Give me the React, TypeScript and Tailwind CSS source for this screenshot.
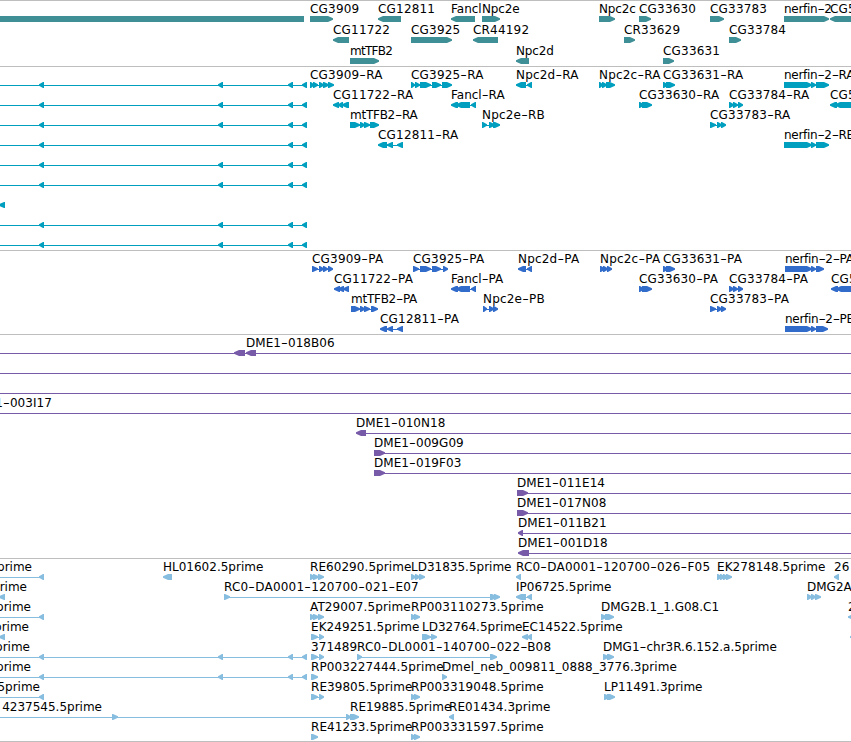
import clsx from 'clsx';

type Strand = '+' | '-';
type Block = [start: number, end: number];

type Feature = {
  row: number;
  strand: Strand;
  blocks: Block[];
  label?: string;
  labelX?: number;
  // right edge of a label whose start is scrolled out of view
  labelEnd?: number;
  line?: Block;
};

type TrackData = {
  name: string;
  height: number;
  pitch: number;
  color: string;
  features: Feature[];
};

const VIEW_WIDTH = 851;
const RIGHT = 860;

const f = (
  row: number,
  label: string,
  strand: Strand,
  blocks: Block[],
  extra: Partial<Feature> = {},
): Feature => ({row, label, strand, blocks, ...extra});

const genes: Feature[] = [
  f(0, '', '-', [[-20, 304]]),
  f(0, 'CG3909', '+', [[310, 333]]),
  f(0, 'CG12811', '-', [[378, 401]]),
  f(0, 'Fancl', '-', [[451, 475]]),
  f(0, 'Npc2e', '+', [[482, 500]]),
  f(0, 'Npc2c', '+', [[599, 615]]),
  f(0, 'CG33630', '+', [[639, 651]]),
  f(0, 'CG33783', '+', [[710, 724]]),
  f(0, 'nerfin-2', '+', [[784, 829]]),
  f(0, 'CG5', '-', [[830, 870]]),
  f(1, 'CG11722', '-', [[333, 349]]),
  f(1, 'CG3925', '+', [[411, 452]]),
  f(1, 'CR44192', '-', [[473, 498]]),
  f(1, 'CR33629', '+', [[624, 635]]),
  f(1, 'CG33784', '+', [[729, 741]]),
  f(2, 'mtTFB2', '+', [[350, 379]]),
  f(2, 'Npc2d', '-', [[516, 529]]),
  f(2, 'CG33631', '+', [[663, 674]]),
];

const longIntrons: Block[] = [[39, 44], [218, 223], [288, 293], [302, 307]];

const transcripts: Feature[] = [
  ...[0, 1, 2, 4, 5, 7, 8].map((row) => f(row, '', '-', longIntrons, {line: [-5, 304]})),
  f(3, '', '-', [[39, 44], [288, 293], [302, 307]], {line: [-5, 304]}),
  f(6, '', '-', [[-1, 5]]),
  f(0, 'CG3909-RA', '+', [[310, 314], [313, 318], [319, 324], [323, 329], [328, 334]]),
  f(0, 'CG3925-RA', '+', [[411, 415], [415, 420], [420, 431], [432, 441], [442, 452]]),
  f(0, 'Npc2d-RA', '-', [[516, 526], [527, 532]]),
  f(0, 'Npc2c-RA', '+', [[599, 603], [602, 607], [606, 615]]),
  f(0, 'CG33631-RA', '+', [[663, 668], [666, 675]]),
  f(0, 'nerfin-2-RA', '+', [[784, 812], [811, 816], [816, 829]]),
  f(1, 'CG11722-RA', '-', [[333, 339], [338, 343], [342, 349]]),
  f(1, 'Fancl-RA', '-', [[451, 458], [456, 470], [471, 476]]),
  f(1, 'CG33630-RA', '+', [[639, 644], [642, 652]]),
  f(1, 'CG33784-RA', '+', [[729, 734], [733, 738], [738, 743]]),
  f(1, 'CG5', '-', [[830, 837], [835, 870]]),
  f(2, 'mtTFB2-RA', '+', [[350, 360], [360, 365], [364, 370], [370, 379]]),
  f(2, 'Npc2e-RB', '+', [[482, 487], [489, 495], [493, 500]]),
  f(2, 'CG33783-RA', '+', [[710, 716], [717, 722], [721, 726]]),
  f(3, 'CG12811-RA', '-', [[378, 387], [387, 393], [397, 403]]),
  f(3, 'nerfin-2-RB', '+', [[784, 812], [811, 816], [816, 829]]),
];

const proteins: Feature[] = [
  f(0, 'CG3909-PA', '+', [[312, 318], [319, 324], [323, 328], [328, 333]]),
  f(0, 'CG3925-PA', '+', [[413, 419], [420, 431], [432, 441], [443, 448]]),
  f(0, 'Npc2d-PA', '-', [[518, 526], [527, 532]]),
  f(0, 'Npc2c-PA', '+', [[600, 605], [603, 608], [607, 612]]),
  f(0, 'CG33631-PA', '+', [[663, 668], [666, 675]]),
  f(0, 'nerfin-2-PA', '+', [[785, 812], [811, 816], [816, 824]]),
  f(1, 'CG11722-PA', '-', [[334, 340], [338, 344], [343, 349]]),
  f(1, 'Fancl-PA', '-', [[451, 458], [456, 470], [471, 476]]),
  f(1, 'CG33630-PA', '+', [[639, 644], [642, 652]]),
  f(1, 'CG33784-PA', '+', [[729, 734], [733, 738], [738, 743]]),
  f(1, 'CG5', '-', [[831, 838], [836, 870]]),
  f(2, 'mtTFB2-PA', '+', [[351, 360], [360, 365], [364, 370], [371, 378]]),
  f(2, 'Npc2e-PB', '+', [[483, 487], [489, 494], [493, 498]]),
  f(2, 'CG33783-PA', '+', [[710, 716], [717, 722], [721, 726]]),
  f(3, 'CG12811-PA', '-', [[380, 387], [387, 393], [397, 403]]),
  f(3, 'nerfin-2-PB', '+', [[785, 812], [811, 816], [816, 828]]),
];

const clones: Feature[] = [
  f(0, 'DME1-018B06', '-', [[234, 245], [246, 256]], {labelX: 246, line: [-5, RIGHT]}),
  f(1, '', '+', [], {line: [-5, RIGHT]}),
  f(2, '', '+', [], {line: [-5, RIGHT]}),
  f(3, 'DME1-003I17', '+', [], {labelEnd: 52, line: [-5, RIGHT]}),
  f(4, 'DME1-010N18', '-', [[356, 366]], {line: [360, RIGHT]}),
  f(5, 'DME1-009G09', '+', [[374, 385]], {line: [380, RIGHT]}),
  f(6, 'DME1-019F03', '+', [[374, 385]], {line: [380, RIGHT]}),
  f(7, 'DME1-011E14', '+', [[517, 528]], {line: [520, RIGHT]}),
  f(8, 'DME1-017N08', '+', [[517, 528]], {line: [520, RIGHT]}),
  f(9, 'DME1-011B21', '-', [[518, 523]], {line: [520, RIGHT]}),
  f(10, 'DME1-001D18', '-', [[518, 529]], {line: [520, RIGHT]}),
];

const ests: Feature[] = [
  f(0, '5prime', '-', [[39, 44]], {labelEnd: 32, line: [-5, 42]}),
  f(0, 'HL01602.5prime', '-', [[163, 172]]),
  f(0, 'RE60290.5prime', '+', [[310, 315], [313, 319], [318, 324]]),
  f(0, 'LD31835.5prime', '+', [[411, 416], [415, 420], [419, 425]]),
  f(0, 'RC0-DA0001-120700-026-F05', '-', [[516, 521]]),
  f(0, 'EK278148.5prime', '+', [[717, 722], [720, 725], [723, 728], [726, 732]]),
  f(0, '26', '-', [[834, 839]]),
  f(1, '5prime', '-', [[-1, 5]], {labelEnd: 27}),
  f(1, 'RC0-DA0001-120700-021-E07', '+', [[224, 230], [490, 497], [494, 500]]),
  f(1, 'IP06725.5prime', '-', [[516, 526], [527, 532]]),
  f(1, 'DMG2A', '+', [[807, 812], [811, 816], [815, 821]]),
  f(2, '5prime', '-', [[39, 44]], {labelEnd: 31, line: [-5, 42]}),
  f(2, 'AT29007.5prime', '+', [[310, 315], [313, 319], [318, 324]]),
  f(2, 'RP003110273.5prime', '+', [[411, 416], [414, 420]]),
  f(2, 'DMG2B.1_1.G08.C1', '+', [[601, 607], [605, 614]]),
  f(2, '2', '-', [[848, 854]]),
  f(3, '5prime', '-', [[-1, 5]], {labelEnd: 29}),
  f(3, 'EK249251.5prime', '+', [[311, 318], [319, 324]]),
  f(3, 'LD32764.5prime', '+', [[422, 431], [431, 437]]),
  f(3, 'EC14522.5prime', '-', [[522, 528], [527, 532]]),
  f(3, '', '-', [[850, 855]]),
  f(4, '5prime', '-', longIntrons, {labelEnd: 30, line: [-5, 304]}),
  f(4, '371489', '+', [[311, 318], [319, 324]]),
  f(4, 'RC0-DL0001-140700-022-B08', '+', [[357, 362], [490, 497]]),
  f(4, 'DMG1-chr3R.6.152.a.5prime', '+', [[603, 609], [607, 614]]),
  f(5, '5prime', '-', longIntrons, {labelEnd: 31, line: [-5, 304]}),
  f(5, 'RP003227444.5prime', '+', [[311, 318]]),
  f(5, 'Dmel_neb_009811_0888_3776.3prime', '+', [[442, 447]]),
  f(6, '5prime', '-', [[39, 44]], {labelEnd: 40, line: [-5, 42]}),
  f(6, 'RE39805.5prime', '+', [[311, 318], [319, 324]]),
  f(6, 'RP003319048.5prime', '+', [[411, 416], [414, 420]]),
  f(6, 'LP11491.3prime', '+', [[604, 610], [607, 615]]),
  f(7, '4237545.5prime', '+', [[112, 118], [346, 351], [350, 359]], {labelEnd: 102, line: [-5, 350]}),
  f(7, 'RE19885.5prime', '+', [], {labelX: 350}),
  f(7, 'RE01434.3prime', '-', [[449, 454]]),
  f(8, 'RE41233.5prime', '+', [[311, 318]]),
  f(8, 'RP003331597.5prime', '+', [[411, 416], [414, 420]]),
];

const tracks: TrackData[] = [
  {name: 'genes', height: 66, pitch: 21, color: 'fill-[#3e8f96]', features: genes},
  {name: 'transcripts', height: 184, pitch: 20, color: 'fill-[#009fbf]', features: transcripts},
  {name: 'proteins', height: 84, pitch: 20, color: 'fill-[#326ccb]', features: proteins},
  {name: 'clones', height: 224, pitch: 20, color: 'fill-[#775ba8]', features: clones},
  {name: 'ests', height: 183, pitch: 20, color: 'fill-[#87bddf]', features: ests},
];

// letter spacing by label prefix, first match wins
const tracking: [RegExp, string][] = [
  [/^mtTFB2$/, 'tracking-[-0.7px]'],
  [/^mtTFB2/, 'tracking-[-0.25px]'],
  [/^nerfin/, 'tracking-[-0.28px]'],
  [/^Npc2.$/, 'tracking-[-0.15px]'],
  [/^RC0/, 'tracking-[0.2px]'],
  [/^(CG|CR|Npc)/, 'tracking-[0.19px]'],
  [/^(RP|Dmel|AT)/, 'tracking-[0.11px]'],
  [/^(DME|RE|EK|371)/, 'tracking-[0.06px]'],
];

// block with a blunt arrow head on its downstream end
function blockPoints([start, end]: Block, strand: Strand, y: number) {
  const head = Math.min(5, end - start - 1);
  const [tail, tip, neck] = strand === '+' ? [start, end, end - head] : [end, start, start + head];
  return `${tail},${y} ${neck},${y} ${tip},${y + 2.2} ${tip},${y + 3.8} ${neck},${y + 6} ${tail},${y + 6}`;
}

function Label({feature, y}: { feature: Feature; y: number }) {
  const {label = '', labelX, labelEnd, blocks} = feature;
  const x = labelEnd ?? labelX ?? blocks[0]?.[0] ?? 0;
  return (
    <text
      x={x}
      y={y}
      textAnchor={labelEnd === undefined ? 'start' : 'end'}
      className={clsx(
        "fill-black text-[12px] font-['DejaVu_Sans',sans-serif]",
        tracking.find(([prefix]) => prefix.test(label))?.[1],
      )}
    >
      {label.split(/(-)/).map((part, i) =>
        part === '-' ? (
          <tspan key={i} textLength={6.9} lengthAdjust="spacingAndGlyphs">-</tspan>
        ) : (
          <tspan key={i}>{part}</tspan>
        ),
      )}
    </text>
  );
}

function FeatureGlyph({feature, pitch}: { feature: Feature; pitch: number }) {
  const top = feature.row * pitch;
  const {blocks, strand} = feature;
  const line: Block | undefined =
    feature.line ?? (blocks.length > 1 ? [blocks[0][0] + 1, blocks[blocks.length - 1][1] - 1] : undefined);
  return (
    <g>
      {line && <rect x={line[0]} y={top + 18} width={line[1] - line[0]} height={1} shapeRendering="crispEdges"/>}
      {blocks.map((block, i) => (
        <polygon key={i} points={blockPoints(block, strand, top + 15)}/>
      ))}
      {feature.label && <Label feature={feature} y={top + 12}/>}
    </g>
  );
}

function Track({track, last}: { track: TrackData; last: boolean }) {
  return (
    <section className={clsx('w-full overflow-hidden border-t border-[#bebebe]', last && 'border-b')}>
      <svg
        className={clsx('block', track.color)}
        width={VIEW_WIDTH}
        height={track.height - 1}
        aria-label={track.name}
      >
        {track.features.map((feature, i) => (
          <FeatureGlyph key={i} feature={feature} pitch={track.pitch}/>
        ))}
      </svg>
    </section>
  );
}

export default function App() {
  return (
    <main className="flex h-[742px] w-[851px] flex-col overflow-hidden bg-white">
      {tracks.map((track, i) => (
        <Track key={track.name} track={track} last={i === tracks.length - 1}/>
      ))}
    </main>
  );
}
